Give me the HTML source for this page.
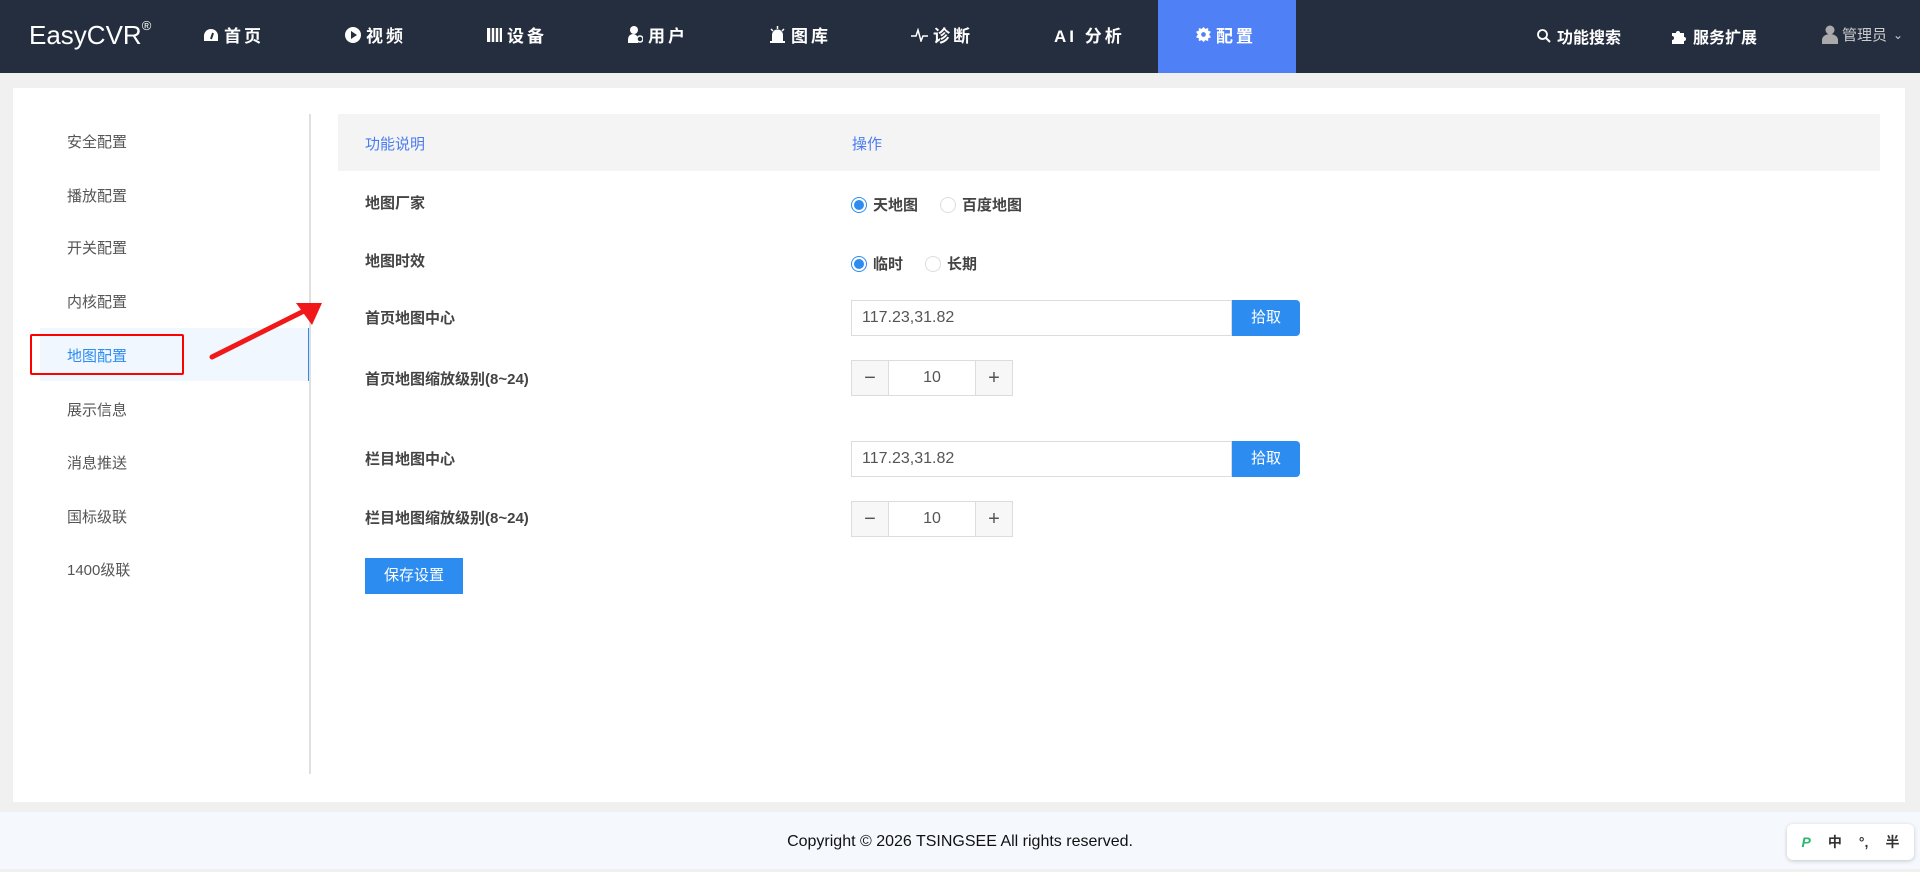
<!DOCTYPE html>
<html><head><meta charset="utf-8"><style>
*{margin:0;padding:0;box-sizing:border-box}
body{width:1920px;height:869px;overflow:hidden;background:#f0f0f0;font-family:"Liberation Sans","Noto Sans CJK SC",sans-serif;position:relative}
.hd{position:absolute;left:0;top:0;width:1920px;height:73px;background:#252e3e;color:#fff}
.logo{position:absolute;left:29px;top:20px;font-size:26px;font-family:"Liberation Sans",sans-serif;font-weight:400}
.logo sup{font-size:13px;position:relative;top:-4px}
.nav{position:absolute;top:22px;font-size:17px;font-weight:bold;letter-spacing:3px;display:flex;align-items:center;white-space:nowrap}
.nav i{display:inline-block;margin-right:5px;line-height:0}
.act{position:absolute;left:1158px;top:0;width:138px;height:73px;background:#4f80f5}
.rt{position:absolute;top:24px;font-size:16px;font-weight:bold;display:flex;align-items:center;white-space:nowrap}
.panel{position:absolute;left:13px;top:88px;width:1892px;height:714px;background:#fff}
.side{position:absolute;left:67px;font-size:15px;color:#555}
.div{position:absolute;left:309px;top:114px;width:2px;height:660px;background:#e0e0e0}
.actbg{position:absolute;left:40px;top:328px;width:271px;height:53px;background:#f0f7fe;border-right:3px solid #2d8cf0}
.red{position:absolute;left:30px;top:334px;width:154px;height:41px;border:2px solid #f00;border-radius:2px}
.th{position:absolute;left:338px;top:114px;width:1542px;height:57px;background:#f4f4f4}
.th span{position:absolute;top:19px;font-size:15px;color:#4a7cf0}
.lab{position:absolute;left:365px;font-size:15px;color:#444;font-weight:bold}
.radio{position:absolute;left:851px;font-size:15px;color:#444;display:flex;align-items:center;font-weight:bold}
.rd{width:16px;height:16px;border-radius:50%;border:1px solid #2d8cf0;display:inline-block;position:relative;margin-right:6px}
.rd.on::after{content:"";position:absolute;left:2px;top:2px;width:10px;height:10px;border-radius:50%;background:#2d8cf0}
.rd.off{border-color:#ddd}
.inp{position:absolute;left:851px;width:381px;height:36px;border:1px solid #dcdcdc;font-size:16px;color:#555;padding:8px 10px}
.btn{position:absolute;left:1232px;width:68px;height:36px;background:#2d8cf0;color:#fff;font-size:15px;text-align:center;line-height:36px;border-radius:0 4px 4px 0}
.num{position:absolute;left:851px;width:162px;height:36px;border:1px solid #dcdcdc;display:flex}
.num .b{width:36px;background:#f7f7f7;text-align:center;line-height:34px;font-size:20px;color:#555}
.num .v{flex:1;border-left:1px solid #dcdcdc;border-right:1px solid #dcdcdc;text-align:center;line-height:34px;font-size:16px;color:#555}
.save{position:absolute;left:365px;top:558px;width:98px;height:36px;background:#2d8cf0;color:#fff;font-size:15px;text-align:center;line-height:36px}
.ft{position:absolute;left:0;top:812px;width:1920px;height:57px;background:#f5f8fc;text-align:center;font-size:16px;line-height:60px;color:#111;font-family:"Liberation Sans",sans-serif}
.ime{position:absolute;left:1787px;top:824px;width:127px;height:36px;background:#fff;border-radius:6px;box-shadow:0 1px 4px rgba(0,0,0,.2);font-size:14px;display:flex;align-items:center;justify-content:space-around;padding:0 6px;font-weight:bold;color:#333}
</style></head><body>
<div class="hd">
<div class="logo">EasyCVR<sup>®</sup></div>
<div class="nav" style="left:203px"><i><svg width="16" height="14" viewBox="0 0 16 14"><path d="M8 1A7 7 0 0 0 1 8v5h14V8A7 7 0 0 0 8 1z" fill="#fff"/><path d="M8 11L10 5" stroke="#252e3e" stroke-width="2"/></svg></i>首页</div>
<div class="nav" style="left:345px"><i><svg width="16" height="16"><circle cx="8" cy="8" r="8" fill="#fff"/><path d="M6 4l6 4-6 4z" fill="#252e3e"/></svg></i>视频</div>
<div class="nav" style="left:487px"><i><svg width="15" height="14"><rect x="0" y="0" width="15" height="14" fill="#fff"/><path d="M4 0v14M8 0v14M12 0v14" stroke="#252e3e" stroke-width="1.5"/></svg></i>设备</div>
<div class="nav" style="left:628px"><i><svg width="15" height="17"><circle cx="6" cy="4" r="4" fill="#fff"/><path d="M0 17v-4a5 5 0 0 1 10 0v4z" fill="#fff"/><circle cx="12" cy="13" r="3" fill="#252e3e" stroke="#fff" stroke-width="1.5"/></svg></i>用户</div>
<div class="nav" style="left:769px"><i><svg width="17" height="17"><path d="M3 16V9a5.5 5.5 0 0 1 11 0v7z" fill="#fff"/><rect x="1" y="15" width="15" height="2" fill="#fff"/><path d="M8.5 0v3M2 3l2 2M15 3l-2 2" stroke="#fff" stroke-width="1.5"/></svg></i>图库</div>
<div class="nav" style="left:911px"><i><svg width="17" height="14"><path d="M0 8h5l2-6 3 11 2-5h5" stroke="#fff" fill="none" stroke-width="1.5"/></svg></i>诊断</div>
<div class="nav" style="left:1054px">AI 分析</div>
<div class="act"></div>
<div class="nav" style="left:1196px"><i><svg width="15" height="15" viewBox="0 0 16 16"><path d="M8 0l2 2 3-1 0 3 3 1-2 3 2 3-3 1 0 3-3-1-2 2-2-2-3 1 0-3-3-1 2-3-2-3 3-1 0-3 3 1z" fill="#fff"/><circle cx="8" cy="8" r="2.5" fill="#4f80f5"/></svg></i>配置</div>
<div class="rt" style="left:1537px"><svg width="14" height="14" style="margin-right:6px"><circle cx="5.5" cy="5.5" r="4.5" stroke="#fff" stroke-width="1.8" fill="none"/><path d="M9 9l4 4" stroke="#fff" stroke-width="2"/></svg>功能搜索</div>
<div class="rt" style="left:1671px"><svg width="16" height="16" style="margin-right:6px"><path d="M1 5h4a2 2 0 1 1 4 0h4v4a2 2 0 1 1 0 4v3H1v-4a2 2 0 1 0 0-4z" fill="#fff"/></svg>服务扩展</div>
<div class="rt" style="left:1822px;font-weight:normal;font-size:15px;color:#ccc"><svg width="16" height="19" style="margin-right:4px"><circle cx="8" cy="5" r="4.5" fill="#aaa"/><path d="M0 19v-4a8 6 0 0 1 16 0v4z" fill="#aaa"/></svg>管理员<span style="margin-left:6px;font-size:12px">&#8964;</span></div>
</div>
<div class="panel"></div>
<div class="actbg"></div>
<div class="div"></div>
<div class="side" style="top:131px">安全配置</div>
<div class="side" style="top:185px">播放配置</div>
<div class="side" style="top:237px">开关配置</div>
<div class="side" style="top:291px">内核配置</div>
<div class="side" style="top:345px;color:#2d8cf0">地图配置</div>
<div class="side" style="top:399px">展示信息</div>
<div class="side" style="top:452px">消息推送</div>
<div class="side" style="top:506px">国标级联</div>
<div class="side" style="top:559px">1400级联</div>
<div class="red"></div>
<svg style="position:absolute;left:200px;top:295px" width="130" height="70"><path d="M12 62L108 14" stroke="#f01818" stroke-width="5" stroke-linecap="round"/><path d="M122 8L96 8 112 30z" fill="#f01818"/></svg>
<div class="th"><span style="left:27px">功能说明</span><span style="left:514px">操作</span></div>
<div class="lab" style="top:192px">地图厂家</div>
<div class="radio" style="top:194px"><span class="rd on"></span>天地图<span class="rd off" style="margin-left:22px"></span>百度地图</div>
<div class="lab" style="top:250px">地图时效</div>
<div class="radio" style="top:253px"><span class="rd on"></span>临时<span class="rd off" style="margin-left:22px"></span>长期</div>
<div class="lab" style="top:307px">首页地图中心</div>
<div class="inp" style="top:300px">117.23,31.82</div><div class="btn" style="top:300px">拾取</div>
<div class="lab" style="top:368px">首页地图缩放级别(8~24)</div>
<div class="num" style="top:360px"><div class="b">−</div><div class="v">10</div><div class="b">+</div></div>
<div class="lab" style="top:448px">栏目地图中心</div>
<div class="inp" style="top:441px">117.23,31.82</div><div class="btn" style="top:441px">拾取</div>
<div class="lab" style="top:507px">栏目地图缩放级别(8~24)</div>
<div class="num" style="top:501px"><div class="b">−</div><div class="v">10</div><div class="b">+</div></div>
<div class="save">保存设置</div>
<div class="ft">Copyright © 2026 TSINGSEE All rights reserved.</div>
<div class="ime"><span style="color:#2ab673;font-style:italic">P</span><span>中</span><span>°,</span><span>半</span></div>
</body></html>
